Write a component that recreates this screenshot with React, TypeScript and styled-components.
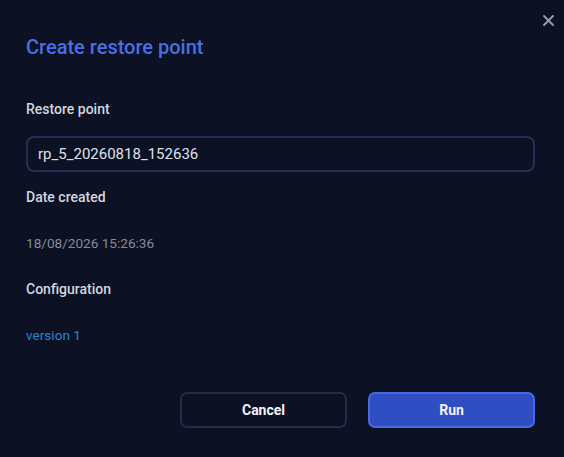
import React from "react";
import styled, { createGlobalStyle } from "styled-components";

const GlobalStyle = createGlobalStyle`
  html, body {
    margin: 0;
    padding: 0;
    background: #0c1123;
  }
  * { box-sizing: border-box; }
  body {
    font-family: Roboto, "Noto Sans", "Liberation Sans", sans-serif;
    -webkit-font-smoothing: antialiased;
  }
`;

const Dialog = styled.div`
  position: relative;
  width: 564px;
  height: 457px;
  background: #0c1123;
  padding: 35px 29px 0 26px;
  display: flex;
  flex-direction: column;
`;

const CloseButton = styled.button`
  position: absolute;
  top: 12px;
  right: 8px;
  width: 16px;
  height: 16px;
  padding: 0;
  border: none;
  background: transparent;
  display: flex;
  align-items: center;
  justify-content: center;
  cursor: pointer;
`;

const Title = styled.h2`
  margin: 0;
  font-size: 20px;
  line-height: 24px;
  font-weight: 500;
  color: #4b6ee2;
`;

const Label = styled.div<{ $top: number }>`
  margin-top: ${(p) => p.$top}px;
  font-size: 14px;
  line-height: 20px;
  font-weight: 500;
  color: #d3d6df;
`;

const Value = styled.div<{ $link?: boolean }>`
  margin-top: 26px;
  font-size: 13.6px;
  line-height: 20px;
  font-weight: 400;
  color: ${(p) => (p.$link ? "#2a87d3" : "#878a9a")};
`;

const Input = styled.input`
  margin-top: 17px;
  width: 100%;
  height: 36px;
  border: 2px solid #2b2e54;
  border-radius: 8px;
  background: transparent;
  padding: 0 10px;
  font-family: inherit;
  font-size: 15px;
  color: #dfe1e9;
  outline: none;
`;

const Footer = styled.div`
  margin-top: 47px;
  display: flex;
  justify-content: flex-end;
  gap: 21px;
`;

const Button = styled.button<{ $primary?: boolean }>`
  width: 167px;
  height: 36px;
  border-radius: 7px;
  border: 2px solid ${(p) => (p.$primary ? "#4a67e6" : "#272a4a")};
  background: ${(p) => (p.$primary ? "#2e4ec2" : "transparent")};
  color: #f2f3f7;
  font-family: inherit;
  font-size: 14px;
  font-weight: 700;
  padding: 0 0 1px;
  cursor: pointer;
`;

export default function App() {
  return (
    <>
      <GlobalStyle />
      <Dialog>
        <CloseButton aria-label="Close">
          <svg width="11" height="11" viewBox="0 0 11 11">
            <path
              d="M1 1 L10 10 M10 1 L1 10"
              stroke="#9a9db0"
              strokeWidth="1.8"
              strokeLinecap="round"
            />
          </svg>
        </CloseButton>
        <Title>Create restore point</Title>
        <Label $top={40}>Restore point</Label>
        <Input defaultValue="rp_5_20260818_152636" />
        <Label $top={15}>Date created</Label>
        <Value>18/08/2026 15:26:36</Value>
        <Label $top={26}>Configuration</Label>
        <Value $link>version 1</Value>
        <Footer>
          <Button>Cancel</Button>
          <Button $primary>Run</Button>
        </Footer>
      </Dialog>
    </>
  );
}
